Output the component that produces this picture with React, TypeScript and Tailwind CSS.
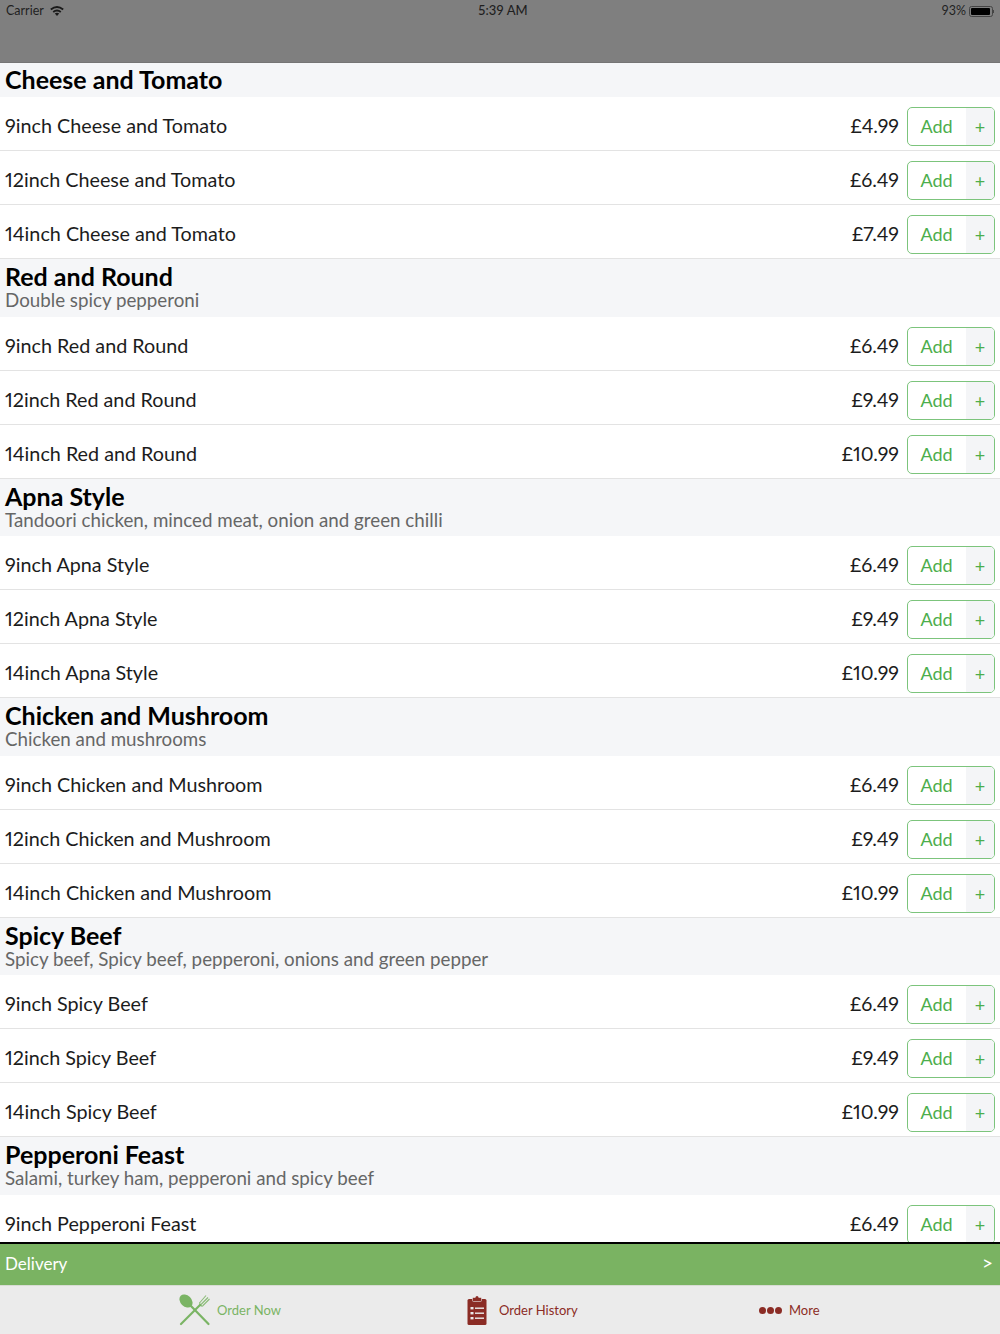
const FONT = "font-['Lato','Noto_Sans',sans-serif]";

const sections = [
  { title: "Cheese and Tomato", prices: ["£4.99", "£6.49", "£7.49"] },
  { title: "Red and Round", sub: "Double spicy pepperoni", prices: ["£6.49", "£9.49", "£10.99"] },
  { title: "Apna Style", sub: "Tandoori chicken, minced meat, onion and green chilli", prices: ["£6.49", "£9.49", "£10.99"] },
  { title: "Chicken and Mushroom", sub: "Chicken and mushrooms", prices: ["£6.49", "£9.49", "£10.99"] },
  { title: "Spicy Beef", sub: "Spicy beef, Spicy beef, pepperoni, onions and green pepper", prices: ["£6.49", "£9.49", "£10.99"] },
  { title: "Pepperoni Feast", sub: "Salami, turkey ham, pepperoni and spicy beef", prices: ["£6.49", "£9.49", "£10.99"] },
];

const sizes = ["9inch", "12inch", "14inch"];

function Row({ name, price }: { name: string; price: string }) {
  return (
    <div className="h-[54px] shrink-0 flex items-center pt-[5px] pl-[5px] pr-[5px] bg-white border-b border-[#e3e3e3]">
      <span className="flex-1 text-[19.75px] proportional-nums text-[#1c1c1c]">{name}</span>
      <span className="text-[19.5px] proportional-nums text-[#1c1c1c] mr-2">{price}</span>
      <div className="self-start mt-[5px] w-[88px] h-[39px] shrink-0 flex rounded-[5px] border border-[#7cc47c] overflow-hidden">
        <span className="flex-1 flex items-center justify-center pr-[1px] text-[18px] text-[#4cae4c]">Add</span>
        <span className="w-[28px] flex items-center justify-center pt-[2px] text-[18px] text-[#4cae4c] bg-[#f4f5f7]">+</span>
      </div>
    </div>
  );
}

function CutleryIcon() {
  return (
    <svg width="32" height="32" viewBox="0 0 32 32" fill="none">
      <ellipse cx="7" cy="7" rx="5.5" ry="7.5" transform="rotate(-45 7 7)" fill="#7ab464" />
      <path d="M11 11 L29.5 30" stroke="#7ab464" strokeWidth="2.2" strokeLinecap="round" />
      <path d="M2 30 L21 11" stroke="#7ab464" strokeWidth="2.2" strokeLinecap="round" />
      <path d="M20 8 L21 12 L24 13 Z" fill="#7ab464" />
      <path d="M20.5 9 L27 1.5 M22 10.5 L29 3.5 M23.5 12 L30.5 5" stroke="#7ab464" strokeWidth="1.1" opacity="0.85" />
    </svg>
  );
}

function ClipboardIcon() {
  return (
    <svg width="20" height="29" viewBox="0 0 20 29" fill="none">
      <rect x="0.5" y="3" width="19" height="26" rx="1.5" fill="#8b2c25" />
      <rect x="5.5" y="1.5" width="9" height="4" rx="1" fill="#8b2c25" stroke="#ebebeb" strokeWidth="0.6" />
      <circle cx="10" cy="1.6" r="1.5" fill="#8b2c25" />
      <rect x="3.5" y="11" width="3" height="2.4" fill="#ebebeb" />
      <rect x="3.5" y="16" width="3" height="2.4" fill="#ebebeb" />
      <rect x="3.5" y="21" width="3" height="2.4" fill="#ebebeb" />
      <rect x="8" y="11.5" width="9" height="1.4" fill="#ebebeb" />
      <rect x="8" y="16.5" width="9" height="1.4" fill="#ebebeb" />
      <rect x="8" y="21.5" width="9" height="1.4" fill="#ebebeb" />
    </svg>
  );
}

function WifiIcon() {
  return (
    <svg width="14" height="10" viewBox="0 0 14 10" fill="none" stroke="#1a1a1a" strokeWidth="1.9">
      <path d="M0.8 3.6 Q7 -1.4 13.2 3.6" />
      <path d="M3.2 6 Q7 3 10.8 6" />
      <path d="M7 10 L4.8 7.6 Q7 6 9.2 7.6 Z" fill="#1a1a1a" stroke="none" />
    </svg>
  );
}

export default function App() {
  return (
    <div className={`w-[1000px] h-[1334px] flex flex-col overflow-hidden bg-white ${FONT}`}>
      <header className="h-[63px] shrink-0 bg-[#7f7f7f] border-b border-[#757575]">
        <div className="h-[20px] relative flex items-center justify-between pt-[2px] px-[6px] text-[12.5px] text-[#1f1f1f]">
          <div className="flex items-center gap-[6px]">
            <span>Carrier</span>
            <WifiIcon />
          </div>
          <span className="absolute left-[478px] text-[13px] font-medium">5:39 AM</span>
          <div className="flex items-center gap-[3px]">
            <span>93%</span>
            <div className="w-[24px] h-[11px] rounded-[2.5px] border border-[#444] p-[1px]">
              <div className="h-full w-[19px] bg-black rounded-[1px]" />
            </div>
            <div className="w-[1px] h-[3px] bg-[#444] -ml-[3px]" />
          </div>
        </div>
      </header>

      <main className="flex-1 min-h-0 overflow-hidden">
        {sections.map((s) => (
          <section key={s.title}>
            <div className={`${s.sub ? "h-[57.5px] pt-[3px]" : "h-[34px] pt-[2px]"} bg-[#f5f6f8] pl-[5px]`}>
              <h2 className="text-[25px] leading-[29px] font-bold text-black">{s.title}</h2>
              {s.sub && <p className="text-[18.75px] leading-[18px] text-[#666]">{s.sub}</p>}
            </div>
            {sizes.map((size, i) => (
              <Row key={size} name={`${size} ${s.title}`} price={s.prices[i]} />
            ))}
          </section>
        ))}
      </main>

      <div className="h-[43px] shrink-0 flex items-center justify-between pb-[2px] pl-[5px] pr-[7px] bg-[#7ab362] border-t-2 border-black text-[17px] text-white">
        <span>Delivery</span>
        <span className="text-[19px]">&gt;</span>
      </div>

      <nav className="h-[49px] shrink-0 relative flex pt-[1px] bg-[#ebebeb] border-t border-[#d8dcd4] text-[13px]">
        <div className="w-[333px] flex items-center pl-[179px] gap-[6px] text-[#7ab464]">
          <div className="-mt-[2px]">
            <CutleryIcon />
          </div>
          <span>Order Now</span>
        </div>
        <div className="w-[333px] flex items-center pl-[134px] gap-[12px] text-[#8b2c25]">
          <ClipboardIcon />
          <span>Order History</span>
        </div>
        <div className="flex-1 flex items-center pl-[93px] gap-[7px] text-[#8b2c25]">
          <div className="flex gap-[1px]">
            <div className="w-[7px] h-[7px] rounded-full bg-[#8b2c25]" />
            <div className="w-[7px] h-[7px] rounded-full bg-[#8b2c25]" />
            <div className="w-[7px] h-[7px] rounded-full bg-[#8b2c25]" />
          </div>
          <span>More</span>
        </div>
      </nav>
    </div>
  );
}
